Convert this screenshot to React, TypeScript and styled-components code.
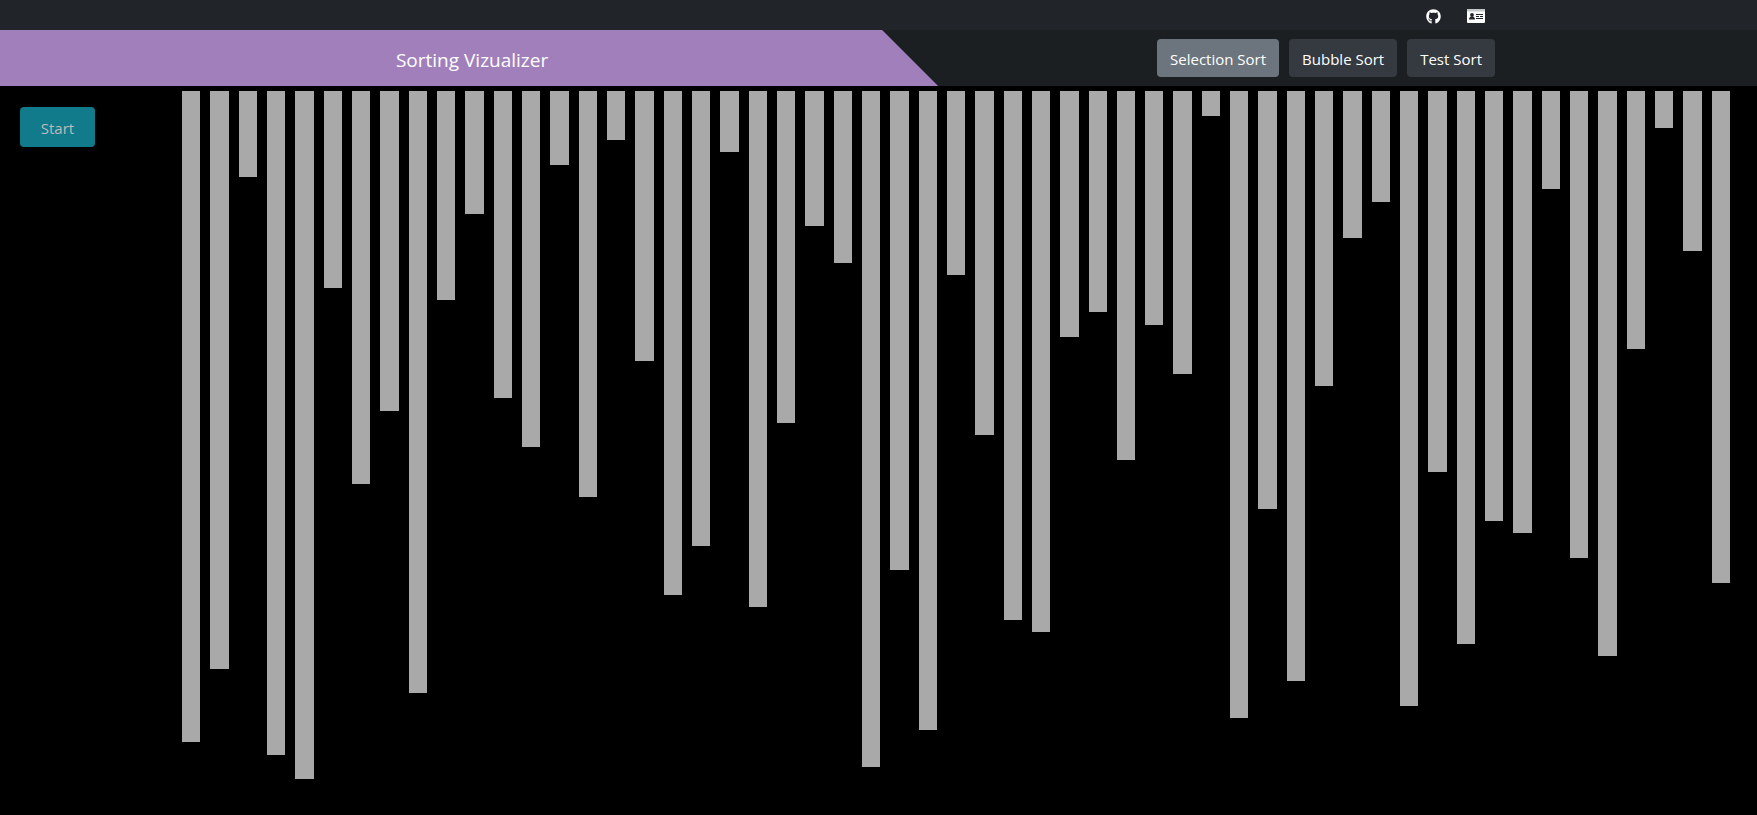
import React, { useState } from "react";
import styled, { createGlobalStyle } from "styled-components";
import { FaGithub } from "react-icons/fa";

const GlobalStyle = createGlobalStyle`
  *, *::before, *::after { box-sizing: border-box; }
  body {
    margin: 0;
    background: #000;
    color: #fff;
    font-family: "Segoe UI", "Open Sans", "Noto Sans", sans-serif;
    font-size: 15px;
    line-height: 24px;
  }
`;

const Page = styled.div`
  display: flex;
  flex-direction: column;
  min-height: 100vh;
`;

const TopBar = styled.div`
  display: flex;
  align-items: center;
  justify-content: flex-end;
  gap: 26px;
  height: 30px;
  padding: 2px 272px 0 0;
  background: #212529;
`;

const IconLink = styled.a`
  display: flex;
  color: #fff;
`;

const Nav = styled.header`
  display: flex;
  align-items: center;
  justify-content: space-between;
  height: 56px;
  padding-right: 262px;
  background: #1b1f22;
`;

const Banner = styled.div`
  display: flex;
  align-items: center;
  justify-content: center;
  width: 62.75%;
  height: 100%;
  padding: 4px 0 0 6px;
  background: #a17fba;
  clip-path: polygon(0 0, calc(100% - 56px) 0, 100% 100%, 0 100%);
`;

const Title = styled.h1`
  margin: 0;
  font-size: 19px;
  font-weight: 400;
  line-height: 28px;
`;

const SortMenu = styled.nav`
  display: flex;
  gap: 10px;
`;

const SortButton = styled.button<{ $active: boolean }>`
  height: 38px;
  padding: 2px 13px 0;
  border: 0;
  border-radius: 4px;
  background: ${({ $active }) => ($active ? "#6c757d" : "#343a40")};
  color: #fff;
  font: inherit;
  white-space: nowrap;
  cursor: pointer;
`;

const Main = styled.main`
  display: grid;
  grid-template-columns: 162px 1fr;
  padding: 5px 27px 0 20px;
`;

const StartButton = styled.button`
  justify-self: start;
  width: 75px;
  height: 40px;
  margin-top: 16px;
  padding: 2px 0 0;
  border: 0;
  border-radius: 4px;
  background: #117a8b;
  color: #bbb;
  font: inherit;
  cursor: pointer;
`;

const Chart = styled.div`
  display: flex;
  align-items: flex-start;
  gap: 10px;
  height: calc(100vh - 92px);
`;

const Bar = styled.div`
  flex: 1;
  background: #a9a9a9;
`;

function IdCardIcon() {
  return (
    <svg width="18" height="14" viewBox="0 0 18 14" aria-hidden="true">
      <rect width="18" height="14" rx="1" fill="#fff" />
      <path d="M0 2.500V1a1 1 0 0 1 1-1h16a1 1 0 0 1 1 1v1.500z" fill="#c3c8c9" />
      <g fill="#212529">
        <circle cx="5" cy="6" r="1.900" />
        <path d="M2 10.500c0-1.900 1-2.700 2-2.700h2c1 0 2 .8 2 2.700z" />
        <path d="M9 5h7v1H9zM9 7h3v1H9zM13 7h3v1h-3zM9 9h7v1H9z" />
      </g>
    </svg>
  );
}

const sorts = ["Selection Sort", "Bubble Sort", "Test Sort"];

const values = [
  53, 47, 7, 54, 56, 16, 32, 26, 49, 17, 10, 25, 29, 6, 33, 4, 22, 41, 37, 5,
  42, 27, 11, 14, 55, 39, 52, 15, 28, 43, 44, 20, 18, 30, 19, 23, 2, 51, 34,
  48, 24, 12, 9, 50, 31, 45, 35, 36, 8, 38, 46, 21, 3, 13, 40,
];

export default function App() {
  const [active, setActive] = useState(sorts[0]);

  return (
    <Page>
      <GlobalStyle />
      <TopBar>
        <IconLink href="#github" aria-label="GitHub">
          <FaGithub size={15} />
        </IconLink>
        <IconLink href="#contact" aria-label="Contact">
          <IdCardIcon />
        </IconLink>
      </TopBar>
      <Nav>
        <Banner>
          <Title>Sorting Vizualizer</Title>
        </Banner>
        <SortMenu>
          {sorts.map((name) => (
            <SortButton
              key={name}
              type="button"
              $active={name === active}
              onClick={() => setActive(name)}
            >
              {name}
            </SortButton>
          ))}
        </SortMenu>
      </Nav>
      <Main>
        <StartButton type="button">Start</StartButton>
        <Chart>
          {values.map((value) => (
            <Bar key={value} style={{ height: `${value * 1.7}%` }} />
          ))}
        </Chart>
      </Main>
    </Page>
  );
}
